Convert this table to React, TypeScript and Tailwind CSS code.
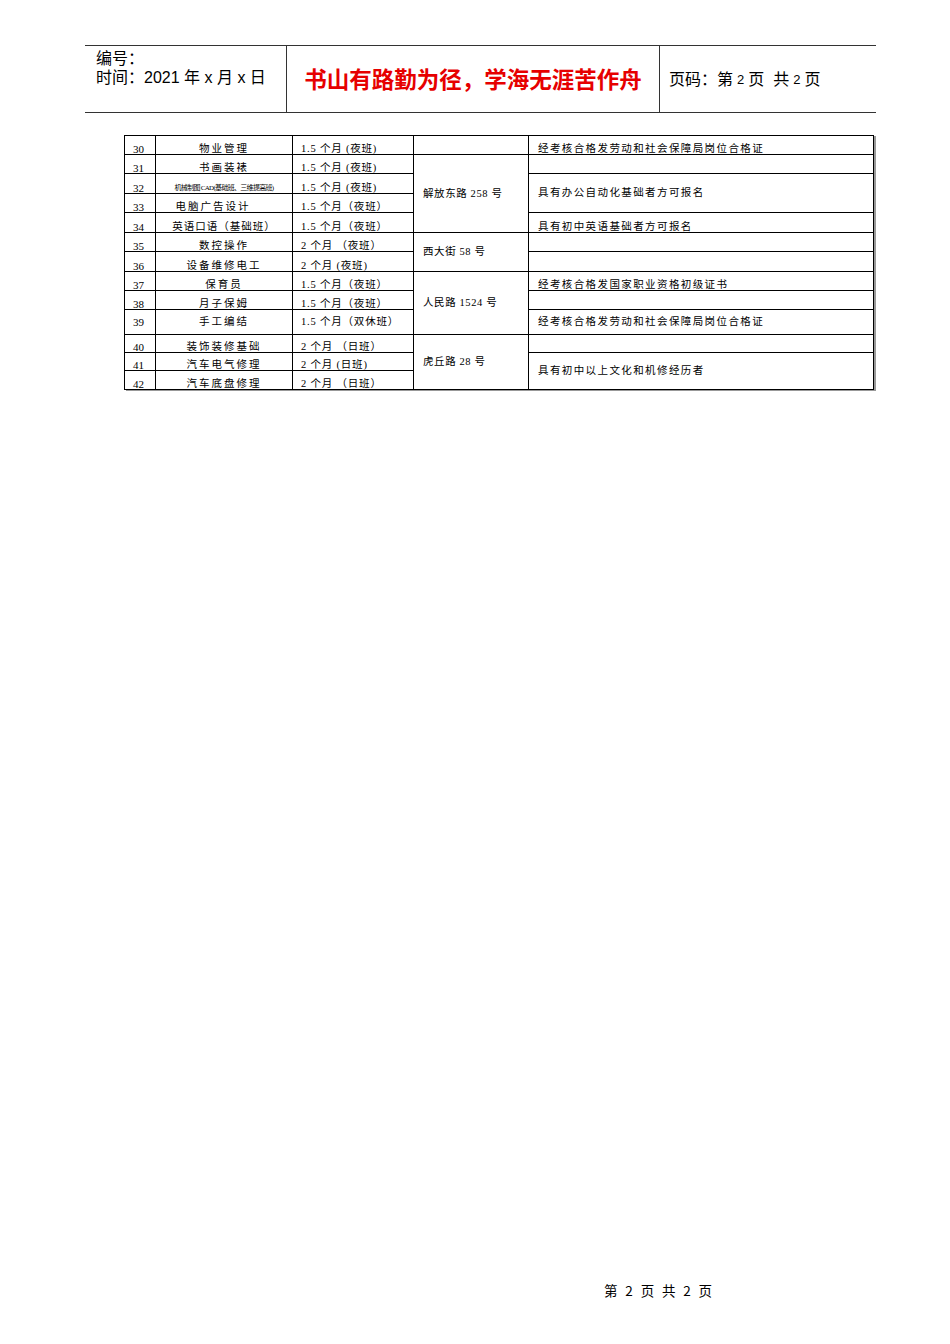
import React from 'react';

type Row = {
  no: string;
  name: string;
  nameClass?: string;
  period: string;
  h: string;
  mid?: boolean;
  addr?: { text: string; span: number };
  note?: { text: string; span: number };
};

const rows: Row[] = [
  { no: '30', name: '物业管理', period: '1.5 个月 (夜班)', h: 'h-[19px]', addr: { text: '', span: 1 }, note: { text: '经考核合格发劳动和社会保障局岗位合格证', span: 1 } },
  { no: '31', name: '书画装裱', period: '1.5 个月 (夜班)', h: 'h-[19px]', addr: { text: '解放东路 258 号', span: 4 }, note: { text: '', span: 1 } },
  { no: '32', name: '机械制图 CAD(基础班、三维提高班)', nameClass: 'text-[7px] tracking-[-0.7px]', period: '1.5 个月 (夜班)', h: 'h-[20px]', note: { text: '具有办公自动化基础者方可报名', span: 2 } },
  { no: '33', name: '电脑广告设计', nameClass: 'pr-[22px] tracking-[2px]', period: '1.5 个月（夜班）', h: 'h-[19px]' },
  { no: '34', name: '英语口语（基础班）', nameClass: 'tracking-[1px]', period: '1.5 个月（夜班）', h: 'h-[20px]', note: { text: '具有初中英语基础者方可报名', span: 1 } },
  { no: '35', name: '数控操作', period: '2 个月 （夜班）', h: 'h-[19px]', addr: { text: '西大街 58 号', span: 2 }, note: { text: '', span: 1 } },
  { no: '36', name: '设备维修电工', period: '2 个月 (夜班)', h: 'h-[20px]', note: { text: '', span: 1 } },
  { no: '37', name: '保育员', period: '1.5 个月（夜班）', h: 'h-[19px]', addr: { text: '人民路 1524 号', span: 3 }, note: { text: '经考核合格发国家职业资格初级证书', span: 1 } },
  { no: '38', name: '月子保姆', period: '1.5 个月（夜班）', h: 'h-[19px]', note: { text: '', span: 1 } },
  { no: '39', name: '手工编结', period: '1.5 个月（双休班）', h: 'h-[25px]', mid: true, note: { text: '经考核合格发劳动和社会保障局岗位合格证', span: 1 } },
  { no: '40', name: '装饰装修基础', period: '2 个月 （日班）', h: 'h-[18px]', addr: { text: '虎丘路 28 号', span: 3 }, note: { text: '', span: 1 } },
  { no: '41', name: '汽车电气修理', period: '2 个月 (日班)', h: 'h-[18px]', note: { text: '具有初中以上文化和机修经历者', span: 2 } },
  { no: '42', name: '汽车底盘修理', period: '2 个月 （日班）', h: 'h-[19px]' },
];

const base = 'border border-black p-0 leading-[10px]';

export default function App() {
  return (
    <div className="relative w-[950px] h-[1344px] bg-white text-black font-['Liberation_Serif','Noto_Sans_CJK_SC',serif] flex flex-col">
      {/* page header */}
      <div className="ml-[85px] mt-[45px] w-[791px] h-[68px] border-t border-b border-[#333] flex font-['Liberation_Sans','Noto_Sans_CJK_SC',sans-serif]">
        <div className="w-[202px] border-r border-[#333] pl-[11px] pt-[3px] text-[16px] leading-[19px]">
          <div>编号：</div>
          <div>时间：2021 年 x 月 x 日</div>
        </div>
        <div className="w-[373px] border-r border-[#333] flex items-center justify-center pt-[4px] text-[22.5px] font-bold text-[#e60000]">
          书山有路勤为径，学海无涯苦作舟
        </div>
        <div className="flex-1 flex items-center pl-[9px] pt-[2px] text-[16px]">
          页码：第<span className="text-[13px] mx-[4px]">2</span>页&nbsp;&nbsp;共<span className="text-[13px] mx-[4px]">2</span>页
        </div>
      </div>

      {/* course table */}
      <table className="ml-[124px] mt-[22px] w-[750px] border-collapse table-fixed text-[10.5px] shadow-[2px_1px_0_#999]">
        <colgroup>
          <col className="w-[31px]" />
          <col className="w-[137px]" />
          <col className="w-[121px]" />
          <col className="w-[115px]" />
          <col className="w-[345px]" />
        </colgroup>
        <tbody>
          {rows.map((r) => {
            const v = r.mid ? 'align-middle' : 'align-bottom';
            return (
              <tr key={r.no} className={r.h}>
                <td className={`${base} ${v} pl-[8px] text-[11px]`}>{r.no}</td>
                <td className={`${base} ${v} text-center whitespace-nowrap overflow-hidden ${r.nameClass ?? 'tracking-[2px]'}`}>{r.name}</td>
                <td className={`${base} ${v} pl-[8px] whitespace-nowrap tracking-[0.8px]`}>{r.period}</td>
                {r.addr && (
                  <td rowSpan={r.addr.span} className={`${base} pl-[9px] align-middle whitespace-nowrap tracking-[0.6px]`}>
                    {r.addr.text}
                  </td>
                )}
                {r.note && (
                  <td
                    rowSpan={r.note.span}
                    className={`${base} pl-[9px] whitespace-nowrap tracking-[1.4px] ${r.note.span > 1 ? 'align-middle' : v}`}
                  >
                    {r.note.text}
                  </td>
                )}
              </tr>
            );
          })}
        </tbody>
      </table>

      {/* page footer */}
      <div className="mt-auto mb-[44px] ml-[604px] text-[13.5px] tracking-[2.4px] font-['Noto_Sans_CJK_SC',sans-serif]">
        第 2 页 共 2 页
      </div>
    </div>
  );
}
